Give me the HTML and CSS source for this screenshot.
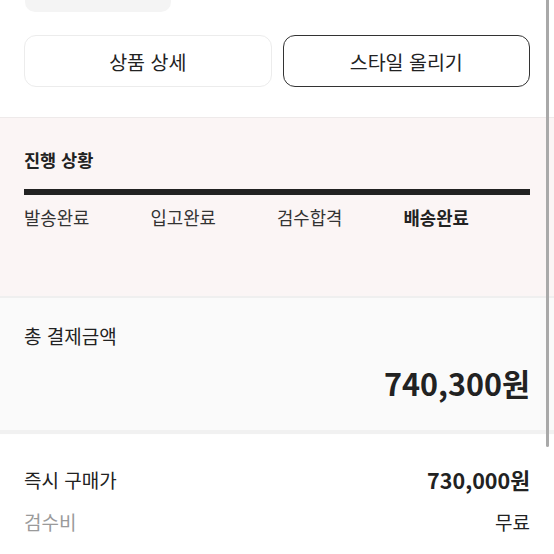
FILE: index.html
```html
<!DOCTYPE html>
<html lang="ko">
<head>
  <meta charset="UTF-8" />
  <meta name="viewport" content="width=device-width, initial-scale=1.0" />
  <title>주문 상세</title>
  <link rel="stylesheet" href="styles.css">
</head>
<body>

  <div class="page">
    <div class="top-pill"></div>

    <div class="actions">
      <button class="btn">상품 상세</button>
      <button class="btn btn-dark">스타일 올리기</button>
    </div>

    <div class="progress">
      <div class="progress-title">진행 상황</div>
      <div class="progress-bar"></div>
      <div class="steps">
        <div class="step">발송완료</div>
        <div class="step">입고완료</div>
        <div class="step">검수합격</div>
        <div class="step step-active">배송완료</div>
      </div>
    </div>

    <div class="total">
      <div class="total-label">총 결제금액</div>
      <div class="total-amount">740,300원</div>
    </div>

    <div class="details">
      <div class="row">
        <span>즉시 구매가</span>
        <span class="price">730,000원</span>
      </div>
      <div class="row">
        <span class="muted">검수비</span>
        <span>무료</span>
      </div>
    </div>
  </div>

  <!-- scroll indicator -->
  <div class="scroll-thumb"></div>

</body>
</html>
```

FILE: styles.css
```css
body {
  margin: 0;
  padding: 0;
  background-color: #fff;
  color: #222;
  font-family: "Noto Sans CJK KR", "Noto Sans", sans-serif;
  overflow: hidden;
}

.page {
  width: 554px;
}

.top-pill {
  width: 146px;
  height: 12px;
  margin-left: 25px;
  background-color: #f4f4f4;
  border-radius: 0 0 10px 10px;
}

.actions {
  display: flex;
  gap: 11px;
  padding: 23px 24px 30px;
}

.btn {
  flex: 1;
  height: 52px;
  border: 1px solid #ececec;
  border-radius: 12px;
  background-color: #fff;
  color: #222;
  font-family: inherit;
  font-size: 19.5px;
  cursor: pointer;
}

.btn-dark {
  border: 1.5px solid #333;
}

/* progress */
.progress {
  height: 179px;
  box-sizing: border-box;
  padding: 30px 24px 0;
  background-color: #fbf5f5;
  border-top: 1px solid #eeeaea;
}

.progress-title {
  font-size: 17.5px;
  font-weight: 700;
  line-height: 24px;
}

.progress-bar {
  height: 6px;
  margin-top: 17px;
  background-color: #222;
}

.steps {
  display: grid;
  grid-template-columns: repeat(4, 1fr);
  margin-top: 10px;
}

.step {
  font-size: 17.8px;
  line-height: 24px;
  color: #333;
}

.step-active {
  font-weight: 700;
  color: #222;
}

/* total */
.total {
  height: 134px;
  box-sizing: border-box;
  padding: 26px 24px 0;
  background-color: #fafafa;
  border-top: 2px solid #efefef;
  box-shadow: 0 3px 3px rgba(0, 0, 0, 0.04);
}

.total-label {
  font-size: 19px;
  line-height: 24px;
}

.total-amount {
  margin-top: 15px;
  text-align: right;
  font-size: 30.5px;
  font-weight: 700;
  line-height: 40px;
}

.details {
  padding: 24px 24px 0;
  border-top: 4px solid #f1f1f1;
}

.row {
  display: flex;
  justify-content: space-between;
  align-items: center;
  height: 42px;
  font-size: 19px;
}

.price {
  font-size: 21.5px;
  font-weight: 700;
}

.muted {
  color: #9a9a9a;
}

.scroll-thumb {
  position: fixed;
  top: 0;
  left: 546px;
  width: 3px;
  height: 447px;
  background-color: #a9a9a9;
  border-radius: 0 0 2px 2px;
}
```
